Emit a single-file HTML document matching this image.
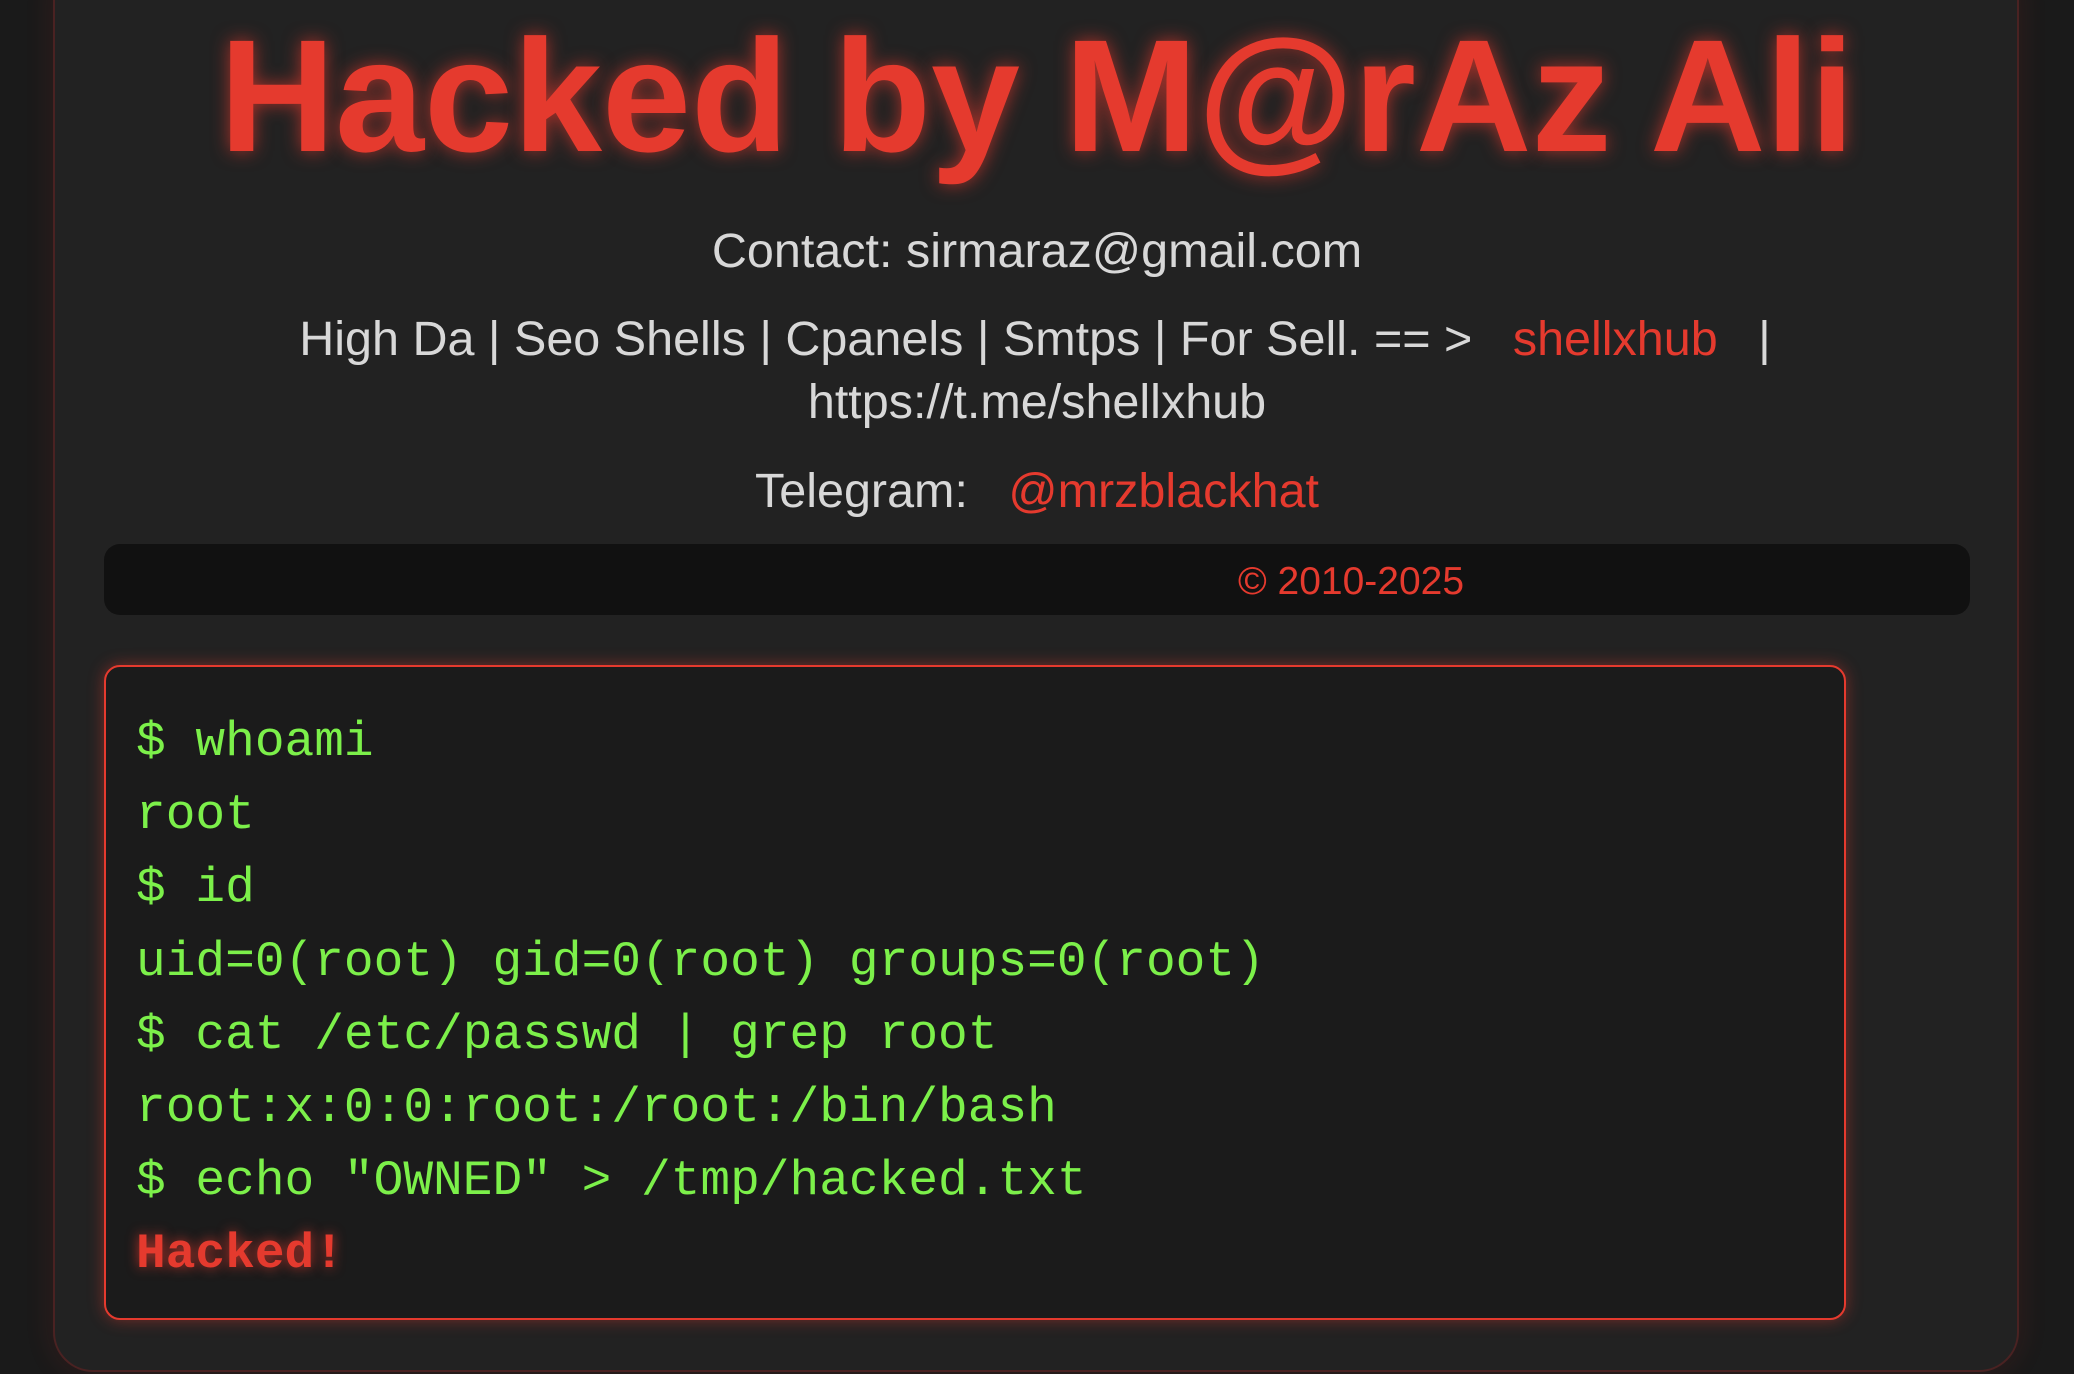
<!DOCTYPE html>
<html><head><meta charset="utf-8"><style>
html,body{margin:0;padding:0;}
body{width:2074px;height:1374px;background:#1a1a1a;position:relative;overflow:hidden;font-family:"Liberation Sans",sans-serif;}
.card{position:absolute;left:53px;top:-40px;width:1966px;height:1412px;background:#222;border:2px solid #4a2222;border-radius:40px;box-shadow:0 0 30px rgba(229,57,46,0.12);box-sizing:border-box;}
.t{position:absolute;left:0;width:2074px;text-align:center;white-space:nowrap;}
h1{position:absolute;left:0;width:2074px;top:6px;margin:0;text-align:center;font-size:160px;font-weight:bold;line-height:180px;color:#e53a2e;text-shadow:0 0 18px rgba(229,57,46,0.7);}
.g{color:#d8d8d8;font-size:48.5px;line-height:60px;}
.r{color:#e53a2e;}
.bar{position:absolute;left:104px;top:544px;width:1866px;height:71px;background:#111;border-radius:16px;}
.term{position:absolute;left:104px;top:665px;width:1742px;height:655px;border:2px solid #e53a2e;border-radius:16px;background:#1b1b1b;box-sizing:border-box;box-shadow:0 0 16px rgba(229,57,46,0.45);}
.mono{position:absolute;left:136px;top:706px;font-family:"Liberation Mono",monospace;font-size:49.5px;line-height:73.2px;color:#7cf04a;white-space:pre;}
.hk{color:#e53a2e;font-weight:bold;text-shadow:0 0 12px rgba(229,57,46,0.8);}
</style></head><body>
<div class="card"></div>
<h1>Hacked by M@rAz Ali</h1>
<div class="t g" style="top:221px">Contact: sirmaraz@gmail.com</div>
<div class="t g" style="top:309px;left:-2px">High Da | Seo Shells | Cpanels | Smtps | For Sell. == &gt; &nbsp;&nbsp;<span class="r">shellxhub</span> &nbsp;&nbsp;|</div>
<div class="t g" style="top:372px">https://t.me/shellxhub</div>
<div class="t g" style="top:461px">Telegram: &nbsp;&nbsp;<span class="r">@mrzblackhat</span></div>
<div class="bar"></div>
<div class="t r" style="top:560px;left:314px;font-size:39px;line-height:44px">© 2010-2025</div>
<div class="term"></div>
<div class="mono">$ whoami
root
$ id
uid=0(root) gid=0(root) groups=0(root)
$ cat /etc/passwd | grep root
root:x:0:0:root:/root:/bin/bash
$ echo "OWNED" &gt; /tmp/hacked.txt
<span class="hk">Hacked!</span></div>
</body></html>
